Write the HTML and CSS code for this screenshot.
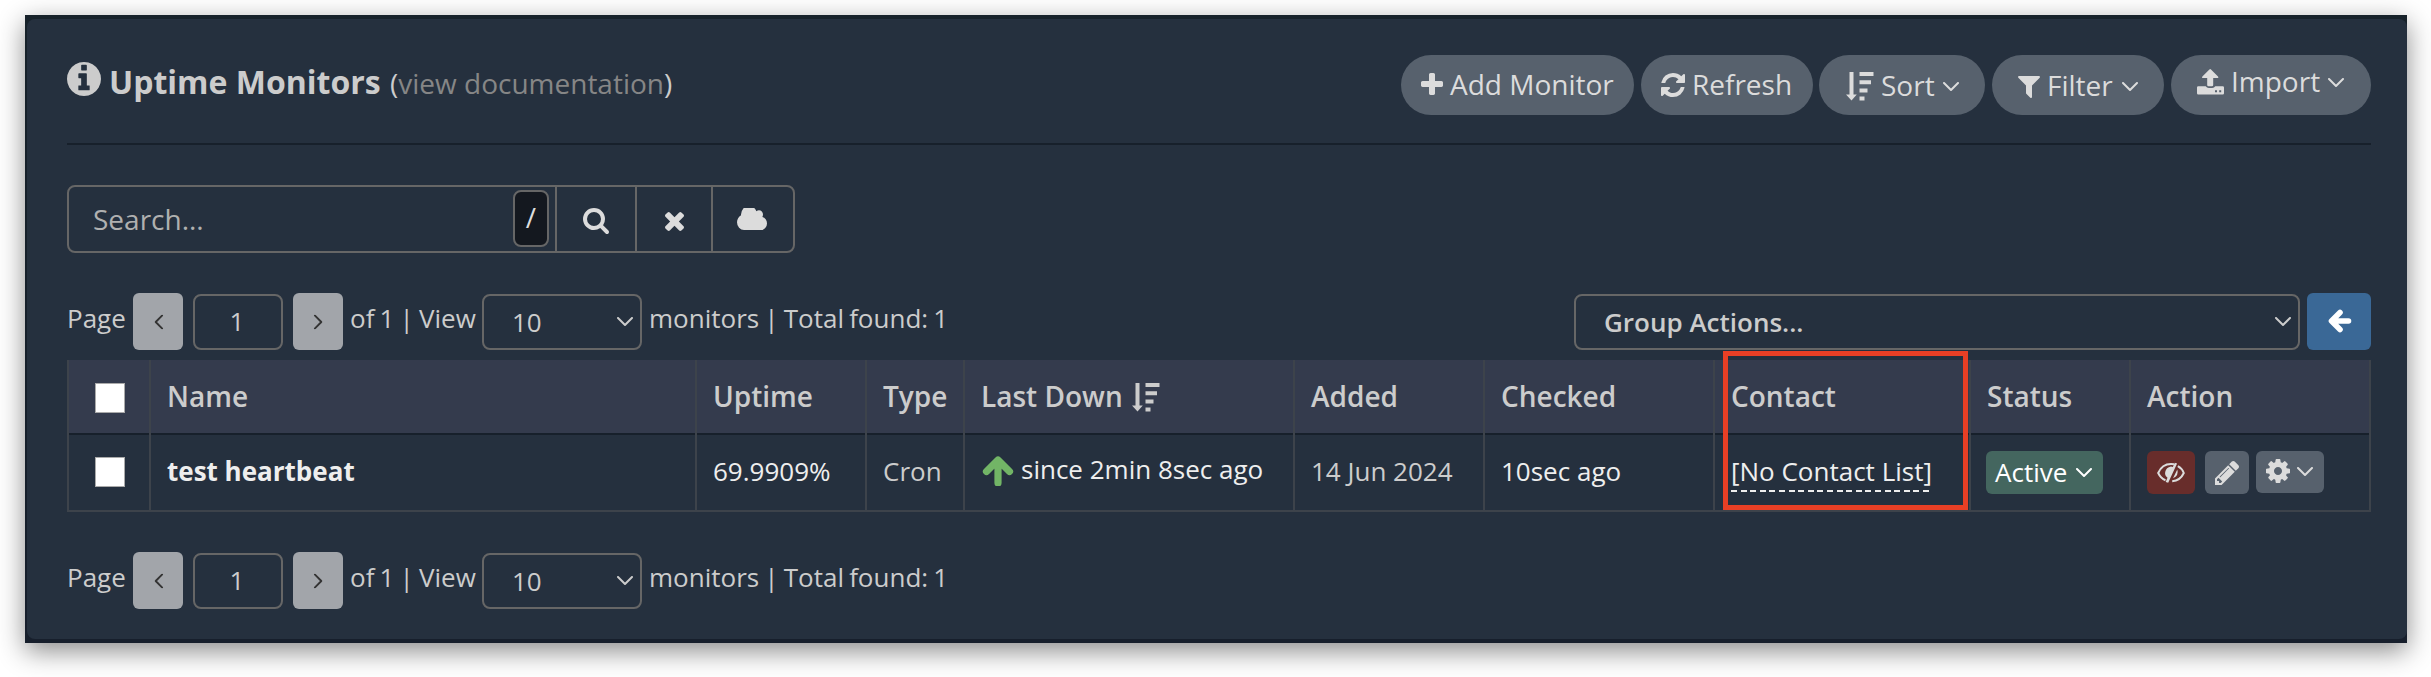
FILE: index.html
```html
<!DOCTYPE html>
<html lang="en">
<head>
<meta charset="utf-8">
<title>Uptime Monitors</title>
<link rel="stylesheet" href="styles.css">
</head>
<body>
<svg class="defs" width="0" height="0" aria-hidden="true">
  <symbol id="info" viewBox="128 128 1536 1536" preserveAspectRatio="none"><path d="M1152 1376v-160q0-14-9-23t-23-9h-96v-512q0-14-9-23t-23-9h-320q-14 0-23 9t-9 23v160q0 14 9 23t23 9h96v320h-96q-14 0-23 9t-9 23v160q0 14 9 23t23 9h448q14 0 23-9t9-23zm-128-896v-192q0-14-9-23t-23-9h-192q-14 0-23 9t-9 23v192q0 14 9 23t23 9h192q14 0 23-9t9-23zm640 416q0 209-103 385.5t-279.5 279.5-385.5 103-385.5-103-279.5-279.5-103-385.5 103-385.5 279.5-279.5 385.5-103 385.5 103 279.5 279.5 103 385.5z"/></symbol>
  <symbol id="plus" viewBox="192 128 1408 1408" preserveAspectRatio="none"><path d="M1600 736v192q0 40-28 68t-68 28h-416v416q0 40-28 68t-68 28h-192q-40 0-68-28t-28-68v-416h-416q-40 0-68-28t-28-68v-192q0-40 28-68t68-28h416v-416q0-40 28-68t68-28h192q40 0 68 28t28 68v416h416q40 0 68 28t28 68z"/></symbol>
  <symbol id="refresh" viewBox="128 128 1536 1536" preserveAspectRatio="none"><path d="M1639 1056q0 5-1 7-64 268-268 434.5t-478 166.5q-146 0-282.5-55t-243.5-157l-129 129q-19 19-45 19t-45-19-19-45v-448q0-26 19-45t45-19h448q26 0 45 19t19 45-19 45l-137 137q71 66 161 102t187 36q134 0 250-65t186-179q11-17 53-117 8-23 30-23h192q13 0 22.5 9.5t9.5 22.5zm25-800v448q0 26-19 45t-45 19h-448q-26 0-45-19t-19-45 19-45l138-138q-148-137-349-137-134 0-250 65t-186 179q-11 17-53 117-8 23-30 23h-199q-13 0-22.5-9.5t-9.5-22.5v-7q65-268 270-434.5t480-166.5q146 0 284 55.5t245 156.5l130-129q19-19 45-19t45 19 19 45z"/></symbol>
  <symbol id="sort" viewBox="0 0 28 29" preserveAspectRatio="none"><path d="M3.500 0h4v22.500h3.300l-5.300 6-5.500-6h3.500zM13.500 0h14v4h-14zM13.500 8.200h11.500v4h-11.500zM13.500 16.400h8v4h-8zM13.500 24.600h5v4h-5z"/></symbol>
  <symbol id="filter" viewBox="190 256 1411 1408" preserveAspectRatio="none"><path d="M1595 295q17 41-14 70l-493 493v742q0 42-39 59-13 5-25 5-27 0-45-19l-256-256q-19-19-19-45v-486l-493-493q-31-29-14-70 17-39 59-39h1280q42 0 59 39z"/></symbol>
  <symbol id="upload" viewBox="0 0 27 26"><path fill-rule="evenodd" d="M12.400.4q.8-.8 1.600 0l7 7.200q1 1.400-.8 1.400h-4v7q0 1.300-1.300 1.300h-3.400q-1.300 0-1.300-1.300v-7h-4q-1.800 0-.8-1.400zM1.300 17.300h7.400q1.100 1.700 3.100 1.700h3.400q2 0 3.100-1.700h7.400q1.300 0 1.300 1.300v5.600q0 1.300-1.300 1.300h-24.400q-1.300 0-1.300-1.300v-5.600q0-1.300 1.300-1.300zM18 21.200v2h2v-2zM22.200 21.200v2h2v-2z"/></symbol>
  <symbol id="search" viewBox="64 128 1664 1664" preserveAspectRatio="none"><path d="M1216 832q0-185-131.5-316.5t-316.5-131.5-316.5 131.5-131.5 316.5 131.5 316.5 316.5 131.5 316.5-131.5 131.5-316.5zm512 832q0 52-38 90t-90 38q-54 0-90-38l-343-342q-179 124-399 124-143 0-273.5-55.5t-225-150-150-225-55.5-273.5 55.5-273.5 150-225 225-150 273.5-55.5 273.5 55.5 225 150 150 225 55.5 273.5q0 220-124 399l343 343q37 37 37 90z"/></symbol>
  <symbol id="times" viewBox="302 366 1188 1188" preserveAspectRatio="none"><path d="M1490 1322q0 40-28 68l-136 136q-28 28-68 28t-68-28l-294-294-294 294q-28 28-68 28t-68-28l-136-136q-28-28-28-68t28-68l294-294-294-294q-28-28-28-68t28-68l136-136q28-28 68-28t68 28l294 294 294-294q28-28 68-28t68 28l136 136q28 28 28 68t-28 68l-294 294 294 294q28 28 28 68z"/></symbol>
  <symbol id="cloud" viewBox="64 256 1920 1280" preserveAspectRatio="none"><path d="M1984 1152q0 159-112.5 271.5t-271.5 112.5h-1088q-185 0-316.5-131.5t-131.5-316.5q0-132 71-241.5t187-163.500q-2-28-2-43 0-212 150-362t362-150q158 0 286.500 88t187.500 230q70-62 166-62 106 0 181 75t75 181q0 75-41 138 129 30 213 134.500t84 239.500z"/></symbol>
  <symbol id="gear" viewBox="128 128 1536 1536" preserveAspectRatio="none"><path d="M1152 896q0-106-75-181t-181-75-181 75-75 181 75 181 181 75 181-75 75-181zm512-109v222q0 12-8 23t-20 13l-185 28q-19 54-39 91 35 50 107 138 10 12 10 25t-9 23q-27 37-99 108t-94 71q-12 0-26-9l-138-108q-44 23-91 38-16 136-29 186-7 28-36 28h-222q-14 0-24.5-8.5t-11.5-21.5l-28-184q-49-16-90-37l-141 107q-10 9-25 9-14 0-25-11-126-114-165-168-7-10-7-23 0-12 8-23 15-21 51-66.5t54-70.5q-27-50-41-99l-183-27q-13-2-21-12.5t-8-23.5v-222q0-12 8-23t19-13l186-28q14-46 39-92-40-57-107-138-10-12-10-24 0-10 9-23 26-36 98.5-107.5t94.5-71.5q13 0 26 10l138 107q44-23 91-38 16-136 29-186 7-28 36-28h222q14 0 24.5 8.5t11.5 21.5l28 184q49 16 90 37l142-107q9-9 24-9 13 0 25 10 129 119 165 170 7 8 7 22 0 12-8 23-15 21-51 66.5t-54 70.5q26 50 41 98l183 28q13 2 21 12.5t8 23.5z"/></symbol>
  <symbol id="pencil" viewBox="128 149 1515 1515" preserveAspectRatio="none"><path d="M491 1536l91-91-235-235-91 91v107h128v128h107zm523-928q0-22-22-22-10 0-17 7l-542 542q-7 7-7 17 0 22 22 22 10 0 17-7l542-542q7-7 7-17zm-54-192l416 416-832 832h-416v-416zm683 96q0 53-37 90l-166 166-416-416 166-165q36-38 90-38 53 0 91 38l235 234q37 39 37 91z"/></symbol>
  <symbol id="hide" viewBox="0 0 28 22"><path d="M17 2.200C8.500 1 3.500 5.500 1.200 11c1.600 3.400 4 6 7.300 7.200M20.800 4.200c2.700 1.400 4.800 3.700 6 6.800-2.200 4.800-6.200 7.800-11.600 8.200" fill="none" stroke="currentColor" stroke-width="2"/><path d="M17.800.7l2.300.7-8.900 19.400-2.500-.8 1.800-4.200Q7.500 13.500 8.200 10q.9-4.600 5.800-5.500l1.800.5zM20.300 7.500q1.800 6-4.300 8.800z"/></symbol>
  <symbol id="arrow" viewBox="0 0 32 30"><path d="M16 27V5M4.500 15.500L16 4l11.500 11.500" fill="none" stroke="currentColor" stroke-width="7.200" stroke-linecap="round" stroke-linejoin="round"/></symbol>
  <symbol id="back" viewBox="0 0 24 24"><path d="M20.500 12H4M12 3.500L3.500 12l8.500 8.500" fill="none" stroke="currentColor" stroke-width="5.600" stroke-linecap="round" stroke-linejoin="round"/></symbol>
  <symbol id="chev" viewBox="0 0 16 10"><path d="M1 1l7 7 7-7" fill="none" stroke="currentColor" stroke-width="2" stroke-linecap="round" stroke-linejoin="round"/></symbol>
</svg>
<main class="window">
<div class="panel">
  <header class="head">
    <svg class="i-info"><use href="#info"/></svg>
    <h1 class="title">Uptime Monitors</h1>
    <span class="docs">(<a>view documentation</a>)</span>
    <nav class="tools">
      <button class="pill add"><svg class="i-plus"><use href="#plus"/></svg><span class="add-t">Add Monitor</span></button>
      <button class="pill ref"><svg class="i-ref"><use href="#refresh"/></svg><span class="ref-t">Refresh</span></button>
      <button class="pill sort"><svg class="i-sort"><use href="#sort"/></svg><span class="sort-t">Sort</span><svg class="chev"><use href="#chev"/></svg></button>
      <button class="pill filt"><svg class="i-filt"><use href="#filter"/></svg><span class="filt-t">Filter</span><svg class="chev"><use href="#chev"/></svg></button>
      <button class="pill imp"><svg class="i-imp"><use href="#upload"/></svg><span class="imp-t">Import</span><svg class="chev"><use href="#chev"/></svg></button>
    </nav>
  </header>
  <div class="search">
    <div class="query"><span class="placeholder">Search...</span><kbd>/</kbd></div>
    <div class="sbtn s1"><svg class="i-search"><use href="#search"/></svg></div>
    <div class="sbtn s2"><svg class="i-times"><use href="#times"/></svg></div>
    <div class="sbtn s3"><svg class="i-cloud"><use href="#cloud"/></svg></div>
  </div>
  <div class="bar">
    <div class="pager">
      <span class="w-page">Page</span>
      <div class="step"><svg class="side prev"><use href="#chev"/></svg></div>
      <div class="num">1</div>
      <div class="step"><svg class="side next"><use href="#chev"/></svg></div>
      <span class="w-of">of 1 | View</span>
      <div class="select"><span>10</span><svg class="chev"><use href="#chev"/></svg></div>
      <span class="w-total">monitors | Total found: 1</span>
    </div>
    <div class="group"><span>Group Actions...</span><svg class="chev wide"><use href="#chev"/></svg></div>
    <div class="apply"><svg class="i-back"><use href="#back"/></svg></div>
  </div>
  <section class="table">
    <div class="row hd">
      <div class="cell check"><i class="box"></i></div>
      <div class="cell">Name</div>
      <div class="cell">Uptime</div>
      <div class="cell">Type</div>
      <div class="cell">Last Down<svg class="i-sort th"><use href="#sort"/></svg></div>
      <div class="cell">Added</div>
      <div class="cell">Checked</div>
      <div class="cell">Contact</div>
      <div class="cell">Status</div>
      <div class="cell">Action</div>
    </div>
    <div class="row bd">
      <div class="cell check"><i class="box"></i></div>
      <div class="cell name">test heartbeat</div>
      <div class="cell lite">69.9909%</div>
      <div class="cell">Cron</div>
      <div class="cell lite since"><svg class="i-up"><use href="#arrow"/></svg><span>since 2min 8sec ago</span></div>
      <div class="cell">14 Jun 2024</div>
      <div class="cell lite">10sec ago</div>
      <div class="cell lite"><a class="contact">[No Contact List]</a></div>
      <div class="cell"><button class="tag">Active<svg class="chev"><use href="#chev"/></svg></button></div>
      <div class="cell acts">
        <button class="act hide"><svg><use href="#hide"/></svg></button>
        <button class="act edit"><svg><use href="#pencil"/></svg></button>
        <button class="act cog"><svg class="i-gear"><use href="#gear"/></svg><svg class="chev"><use href="#chev"/></svg></button>
      </div>
    </div>
    <div class="mark"></div>
  </section>
  <div class="bar foot">
    <div class="pager">
      <span class="w-page">Page</span>
      <div class="step"><svg class="side prev"><use href="#chev"/></svg></div>
      <div class="num">1</div>
      <div class="step"><svg class="side next"><use href="#chev"/></svg></div>
      <span class="w-of">of 1 | View</span>
      <div class="select"><span>10</span><svg class="chev"><use href="#chev"/></svg></div>
      <span class="w-total">monitors | Total found: 1</span>
    </div>
  </div>
</div>
</main>
</body>
</html>
```
FILE: styles.css
```css
* { box-sizing: border-box; }
body {
  margin: 0; width: 2431px; height: 677px; overflow: hidden; background: #fff;
  padding: 15px 24px 34px 25px;
  font-family: "Open Sans", "Noto Sans", sans-serif; font-size: 28px; color: #ccc;
}
.defs { position: absolute; }
svg { display: block; flex: none; fill: currentColor; }
button { border: 0; margin: 0; padding: 0; font: inherit; color: inherit; }
span, h1, .cell { white-space: nowrap; }

.window {
  height: 628px; padding: 4px 0 4px 2px;
  background: linear-gradient(#17222a, #171f2c);
  box-shadow: 0 8px 25px rgba(0, 0, 0, .46);
}
.panel {
  height: 620px; padding: 36px 36px 0 40px;
  background: #25303e; border-radius: 8px;
}

.head {
  display: flex; align-items: flex-start; height: 90px;
  border-bottom: 2px solid #17202b;
}
.i-info { width: 34px; height: 34px; margin-top: 7px; }
.title { margin: 0 0 0 8px; width: 281px; font-size: 32px; font-weight: 700; line-height: 53px; }
.docs { font-size: 28px; line-height: 56px; }
.docs a { color: #868686; }

.tools { display: flex; gap: 7px; margin-left: auto; }
.pill {
  display: flex; align-items: flex-start; height: 60px; border-radius: 30px;
  background: #57616d; color: #dcdcdc; font-size: 28px; line-height: 58px; text-align: left;
}
.chev { width: 16px; height: 10px; }
.add { width: 233px; padding-left: 20px; }
.ref { width: 172px; padding-left: 20px; }
.sort { width: 166px; margin-left: -1px; padding-left: 27px; line-height: 60px; }
.filt { width: 172px; padding-left: 26px; line-height: 60px; }
.imp { width: 200px; padding-left: 26px; line-height: 52px; }
.i-plus { width: 22px; height: 22px; margin: 18px 7px 0 0; }
.i-ref { width: 24px; height: 24px; margin: 18px 7px 0 0; }
.i-sort { width: 28px; height: 29px; }
.sort .i-sort { margin: 17px 7px 0 0; }
.i-filt { width: 22px; height: 22px; margin: 21px 7px 0 0; }
.i-imp { width: 27px; height: 26px; margin: 14px 7px 0 0; }
.sort-t { width: 62px; }
.filt-t { width: 75px; }
.imp-t { width: 97px; }
.sort .chev, .filt .chev { margin-top: 27px; }
.imp .chev { margin-top: 23px; }

.search {
  display: flex; width: 728px; height: 68px; margin-top: 40px;
  border: 2px solid #666; border-radius: 8px;
}
.query { display: flex; width: 486px; padding: 3px 0 0 24px; }
.placeholder { width: 420px; color: #b0b0b0; line-height: 59px; }
kbd {
  width: 36px; height: 57px; border: 2px solid #666; border-radius: 8px;
  background: #14181f; color: #ddd; font: inherit; text-align: center; line-height: 51px;
}
.sbtn { border-left: 2px solid #666; color: #dcdcdc; }
.s1 { width: 80px; padding: 21px 0 0 26px; }
.s2 { width: 76px; padding: 25px 0 0 28px; }
.s3 { padding: 21px 0 0 24px; }
.i-search { width: 26px; height: 26px; }
.i-times { width: 19px; height: 19px; }
.i-cloud { width: 30px; height: 22px; }

.bar { display: flex; align-items: flex-start; height: 67px; margin-top: 40px; font-size: 26px; }
.pager { display: flex; align-items: flex-start; line-height: 50px; word-spacing: -1.600px; }
.w-page { width: 66px; }
.step {
  display: flex; align-items: center; justify-content: center;
  width: 50px; height: 57px; border-radius: 6px; background: #a2a5aa; color: #333;
}
.side { width: 15px; height: 10px; }
.prev { transform: rotate(90deg); }
.next { transform: rotate(-90deg); }
.num, .select, .group { border: 2px solid #666; border-radius: 8px; height: 56px; margin-top: 1px; }
.num { width: 90px; margin-left: 10px; margin-right: 10px; text-align: center; padding-right: 2px; line-height: 51px; }
.w-of { width: 132px; margin-left: 7px; }
.select { display: flex; width: 160px; padding: 0 7px 0 28px; justify-content: space-between; line-height: 52px; }
.select .chev, .group .chev { margin-top: 21px; }
.w-total { margin-left: 7px; }
.group {
  display: flex; justify-content: space-between; width: 726px;
  margin-left: auto; padding: 0 6px 0 28px; line-height: 52px; font-weight: 600;
}
.wide { width: 18px; }
.apply {
  width: 64px; height: 57px; margin-left: 7px; padding: 16px 0 0 21px;
  border-radius: 6px; background: #3a6896; color: #fff;
}
.i-back { width: 24px; height: 24px; }

.table { position: relative; border-bottom: 2px solid #3d434b; }
.row {
  display: grid;
  grid-template-columns: 82px 546px 170px 98px 330px 190px 230px 256px 160px 242px;
}
.cell { display: flex; align-items: flex-start; padding-left: 16px; border-left: 2px solid #3d434b; }
.cell:last-child { border-right: 2px solid #3d434b; }
.hd .cell { height: 75px; background: #343b4d; font-weight: 600; line-height: 72px; box-shadow: inset 0 -2px #17202b; }
.bd .cell { height: 75px; font-size: 26px; line-height: 73px; }
.row .check { padding-left: 26px; }
.box { width: 30px; height: 30px; border: 1px solid #aaa; background: #fff; margin-top: 22px; }
.hd .box { margin-top: 23px; }
.th { margin: 23px 0 0 9px; }
.name { font-weight: 700; color: #eee; }
.lite { color: #eee; }
.bd .since { padding-left: 17px; line-height: 69px; }
.i-up { width: 32px; height: 30px; margin: 21px 7px 0 0; color: #72b566; }
.contact { height: 57px; background: repeating-linear-gradient(90deg, #eee 0 6px, transparent 6px 9.600px) 0 100% / 100% 2px no-repeat; }
.tag {
  display: flex; width: 117px; height: 43px; margin: 16px 0 0 -1px; padding-left: 9px;
  border-radius: 6px; background: #44665f; color: #fff; line-height: 42px;
}
.tag .chev { margin: 17px 0 0 9px; }
.act { display: flex; height: 43px; margin-top: 16px; border-radius: 6px; background: #57616d; color: #dcdcdc; }
.act.hide { width: 48px; background: #682d2b; padding: 11px 0 0 10px; }
.hide svg { width: 28px; height: 22px; }
.edit { width: 44px; margin-left: 10px; padding: 10px 0 0 10px; }
.edit svg { width: 24px; height: 24px; }
.cog { width: 68px; margin-left: 7px; padding: 8px 0 0 10px; }
.act.cog { height: 42px; }
.i-gear { width: 24px; height: 24px; }
.cog .chev { margin: 8px 0 0 7px; }
.mark { position: absolute; left: 1656px; top: -9px; width: 245px; height: 159px; border: 5px solid #e83f25; }
.foot { height: 57px; }
```
